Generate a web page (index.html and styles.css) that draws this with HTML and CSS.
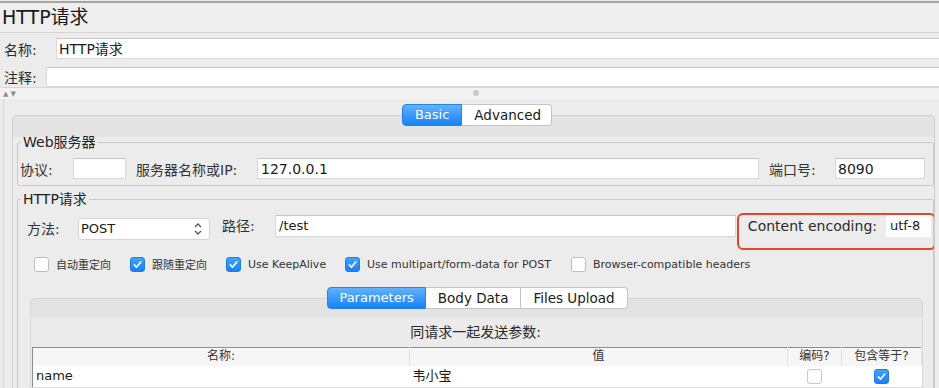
FILE: index.html
```html
<!DOCTYPE html>
<html lang="zh-CN">
<head>
<meta charset="utf-8">
<title>HTTP请求</title>
<link rel="stylesheet" href="styles.css">
</head>
<body>
<div class="window">
  <div class="title">HTTP请求</div>
  <div class="row name-row"><span class="lbl lbl-name">名称:</span><div class="field field-name">HTTP请求</div></div>
  <div class="row comment-row"><span class="lbl lbl-comment">注释:</span><div class="field field-comment"></div></div>
  <div class="splitter"><span class="arrows">▲▼</span><span class="handle"></span></div>
  <div class="lower">
    <div class="tabs main-tabs"><span class="tab active">Basic</span><span class="tab">Advanced</span></div>
    <div class="tabpanel">
      <fieldset class="group web">
        <legend>Web服务器</legend>
        <div class="web-row">
          <span class="lbl lbl-proto">协议:</span>
          <div class="field f-proto"></div>
          <span class="lbl lbl-host">服务器名称或IP:</span>
          <div class="field f-host">127.0.0.1</div>
          <span class="lbl lbl-port">端口号:</span>
          <div class="field f-port">8090</div>
        </div>
      </fieldset>
      <fieldset class="group http">
        <legend>HTTP请求</legend>
        <div class="http-row">
          <span class="lbl lbl-method">方法:</span>
          <div class="select">POST<svg class="updown" viewBox="0 0 10 14"><path d="M2 5 L5 2 L8 5 M2 9 L5 12 L8 9"/></svg></div>
          <span class="lbl lbl-path">路径:</span>
          <div class="field f-path">/test</div>
          <div class="encoding">
            <span class="lbl lbl-enc">Content encoding:</span>
            <div class="field f-enc">utf-8</div>
          </div>
        </div>
        <div class="checks">
          <label class="chk w1"><span class="cb"></span>自动重定向</label>
          <label class="chk w2"><span class="cb on"><svg viewBox="0 0 15 15"><path d="M3.8 7.9 L6.4 10.5 L11.3 4.5"/></svg></span>跟随重定向</label>
          <label class="chk w3"><span class="cb on"><svg viewBox="0 0 15 15"><path d="M3.8 7.9 L6.4 10.5 L11.3 4.5"/></svg></span>Use KeepAlive</label>
          <label class="chk w4"><span class="cb on"><svg viewBox="0 0 15 15"><path d="M3.8 7.9 L6.4 10.5 L11.3 4.5"/></svg></span>Use multipart/form-data for POST</label>
          <label class="chk"><span class="cb"></span>Browser-compatible headers</label>
        </div>
        <div class="tabs param-tabs"><span class="tab active">Parameters</span><span class="tab">Body Data</span><span class="tab">Files Upload</span></div>
        <div class="param-panel">
          <div class="param-title">同请求一起发送参数:</div>
          <table class="params">
            <colgroup><col class="c1"><col class="c2"><col class="c3"><col class="c4"></colgroup>
            <thead>
              <tr><th>名称:</th><th>值</th><th>编码?</th><th>包含等于?</th></tr>
            </thead>
            <tbody>
              <tr>
                <td class="t-name">name</td>
                <td class="t-val">韦小宝</td>
                <td class="t-cb"><span class="cb small"></span></td>
                <td class="t-cb"><span class="cb small on"><svg viewBox="0 0 15 15"><path d="M3.8 7.9 L6.4 10.5 L11.3 4.5"/></svg></span></td>
              </tr>
            </tbody>
          </table>
        </div>
      </fieldset>
    </div>
  </div>
</div>
</body>
</html>
```
FILE: styles.css
```css
* { box-sizing: border-box; }
html, body { margin: 0; padding: 0; }
body {
  width: 939px;
  height: 388px;
  overflow: hidden;
  background: #ececec;
  font-family: "DejaVu Sans", "Noto Sans CJK SC", sans-serif;
  font-size: 13px;
  color: #222;
}
.window { margin-top: 1px; border-top: 2px solid #a4a4a4; height: 387px; overflow: hidden; }
.title {
  height: 30px;
  font-size: 19px;
  line-height: 28px;
  padding-left: 2px;
  background: #eeeeee;
  border-bottom: 1px solid #d3d3d3;
  color: #1a1a1a;
}
.row { display: flex; align-items: center; }
.lbl { font-family: "DejaVu Sans", "Noto Sans CJK SC", sans-serif; white-space: nowrap; color: #333; }
.field {
  background: #fff;
  border: 1px solid #d9d9d9;
  border-top-color: #c6c6c6;
  height: 22px;
  line-height: 20px;
  padding-left: 2px;
  white-space: nowrap;
  overflow: hidden;
  color: #1a1a1a;
}
.name-row { padding: 5px 0 0 4px; }
.lbl-name, .lbl-comment { font-size: 14px; color: #2a2a2a; }
.lbl-name { width: 52px; }
.field-name { flex: 1; height: 21px; font-size: 14px; margin-right: -2px; }
.comment-row { padding: 8px 0 0 4px; }
.lbl-comment { width: 42px; }
.field-comment { flex: 1; height: 20px; margin-right: -2px; }
.splitter {
  height: 12px;
  background: #f3f3f3;
  border-top: 1px solid #d6d6d6;
  display: flex;
  align-items: center;
  padding-left: 3px;
}
.arrows { font-size: 7px; color: #8d8d8d; letter-spacing: 2px; width: 18px; line-height: 8px; }
.handle {
  width: 6px; height: 6px; border-radius: 50%;
  background: #c9c9c9; margin-left: 452px; margin-top: -2px;
}
.lower {
  margin-left: 3px;
  border-left: 1px solid #d6d6d6;
  padding: 5px 4px 0 8px;
  height: 289px;
}
.tabs { display: flex; justify-content: center; position: relative; z-index: 1; }
.tab {
  height: 22px;
  line-height: 20px;
  padding: 0 9px;
  background: #fff;
  border: 1px solid #c4c4c4;
  border-left: none;
  color: #1a1a1a;
  font-size: 13px;
}
.tab:first-child { border-left: 1px solid #c4c4c4; border-radius: 4px 0 0 4px; }
.tab:last-child { border-radius: 0 4px 4px 0; }
.tab.active {
  background: linear-gradient(#62b0fb, #1684f6);
  border-color: #2384ea;
  color: #fff;
}
.main-tabs { margin-bottom: -11px; padding-left: 7px; }
.main-tabs .tab.active { padding: 0 12px; }
.main-tabs .tab:last-child { padding: 0 10px 0 12px; font-size: 13.5px; }
.tabpanel {
  border: 1px solid #cdcdcd;
  border-bottom: none;
  border-radius: 5px 5px 0 0;
  background: linear-gradient(#e4e4e4 0, #e4e4e4 21px, #ececec 21px);
  padding: 18px 0 0 4px;
  height: 273px;
  overflow: hidden;
}
.group {
  margin: 0;
  border: 1px solid #c9c9c9;
  border-radius: 2px;
  padding: 0 2px;
  min-width: 0;
}
.group legend {
  padding: 0 2px;
  margin-left: 1px;
  font-size: 14px;
  line-height: 17px;
  color: #222;
}
.web-row {
  display: flex;
  align-items: center;
  padding: 7px 6px 6px 0;
}
.web-row .lbl, .http-row .lbl-method, .http-row .lbl-path { font-size: 14px; }
.lbl-proto { width: 53px; }
.f-proto { width: 53px; height: 21px; }
.lbl-host { width: 121px; margin-left: 10px; }
.f-host { flex: 1; height: 21px; padding-left: 3px; font-size: 14px; }
.lbl-port { width: 66px; margin-left: 10px; }
.f-port { width: 90px; height: 21px; font-size: 14px; }
.http { margin-top: 5px; height: 200px; border-bottom: none; }
.http-row {
  display: flex;
  align-items: flex-start;
  padding: 5px 0 0 7px;
  margin-right: -5px;
}
.lbl-method { width: 51px; margin-top: 5px; line-height: 22px; }
.select {
  width: 132px;
  height: 22px;
  margin-top: 5px;
  background: #fff;
  border: 1px solid #d4d4d4;
  border-radius: 3px;
  line-height: 20px;
  padding-left: 2px;
  display: flex;
  align-items: center;
  justify-content: space-between;
  color: #1a1a1a;
}
.updown { width: 10px; height: 14px; margin-right: 6px; fill: none; stroke: #555; stroke-width: 1.3; }
.lbl-path { width: 53px; margin-left: 12px; margin-top: 2px; line-height: 22px; }
.f-path { flex: 1; margin-top: 2px; height: 22px; padding-left: 3px; }
.encoding {
  display: flex;
  align-items: flex-start;
  border: 2px solid #e8432d;
  border-radius: 6px;
  padding: 0 3px 11px 9px;
  margin-left: 1px;
}
.lbl-enc { line-height: 22px; margin-right: 9px; color: #2a2a2a; font-size: 14px; }
.f-enc { width: 45px; height: 22px; border-color: #fff; padding-left: 3px; }
.checks {
  display: flex;
  align-items: center;
  padding: 6px 0 0 14px;
  font-size: 11px;
  color: #333;
}
.chk { display: flex; align-items: center; white-space: nowrap; flex: none; }
.chk.w1, .chk.w2 { width: 96px; }
.chk.w3 { width: 119px; }
.chk.w4 { width: 226px; }
.cb {
  width: 15px; height: 15px;
  border: 1px solid #bdbdbd;
  border-radius: 3px;
  background: #fff;
  margin-right: 7px;
  display: inline-flex;
  align-items: center;
  justify-content: center;
  flex: none;
}
.cb.on { background: linear-gradient(#45a2fa, #1a80f4); border-color: #1d7ee6; }
.cb svg { width: 15px; height: 15px; fill: none; stroke: #fff; stroke-width: 1.9; stroke-linecap: round; stroke-linejoin: round; }
.param-tabs { margin-top: 15px; margin-bottom: -11px; padding-left: 4px; }
.param-tabs .tab { padding: 0 12px; font-size: 13.5px; }
.param-tabs .tab.active { padding: 0 11px; font-size: 13px; }
.param-panel {
  margin: 0 8px 0 10px;
  border: 1px solid #d7d7d7;
  border-radius: 5px 5px 0 0;
  background: linear-gradient(#e3e3e3 0, #e3e3e3 19px, #ebebeb 19px);
  padding: 19px 1px 0 1px;
  height: 90px;
  overflow: hidden;
}
.param-title { text-align: center; font-size: 14px; line-height: 29px; color: #2a2a2a; padding-right: 2px; }
.params {
  border-collapse: collapse;
  table-layout: fixed;
  width: 889px;
  border-top: 1px solid #8e8e8e;
  border-left: 1px solid #8e8e8e;
  background: #fff;
}
.c1 { width: 377px; }
.c2 { width: 378px; }
.c3 { width: 54px; }
.c4 { width: 80px; }
.params th {
  height: 18px;
  padding: 0;
  font-weight: normal;
  font-size: 12px;
  line-height: 17px;
  background: #f6f6f6;
  color: #333;
  border-right: 1px solid #e2e2e2;
}
.params td { height: 22px; line-height: 20px; padding: 0 3px; vertical-align: top; font-size: 13px; color: #1a1a1a; }
.t-val { font-size: 12px; }
.t-cb { text-align: center; }
.params td.t-cb { padding-top: 3px; line-height: 15px; }
.cb.small { width: 15px; height: 15px; margin: 0; vertical-align: top; border-color: #c9c9c9; }
.params .t-cb .cb.on { border-color: #1d7ee6; }
```
